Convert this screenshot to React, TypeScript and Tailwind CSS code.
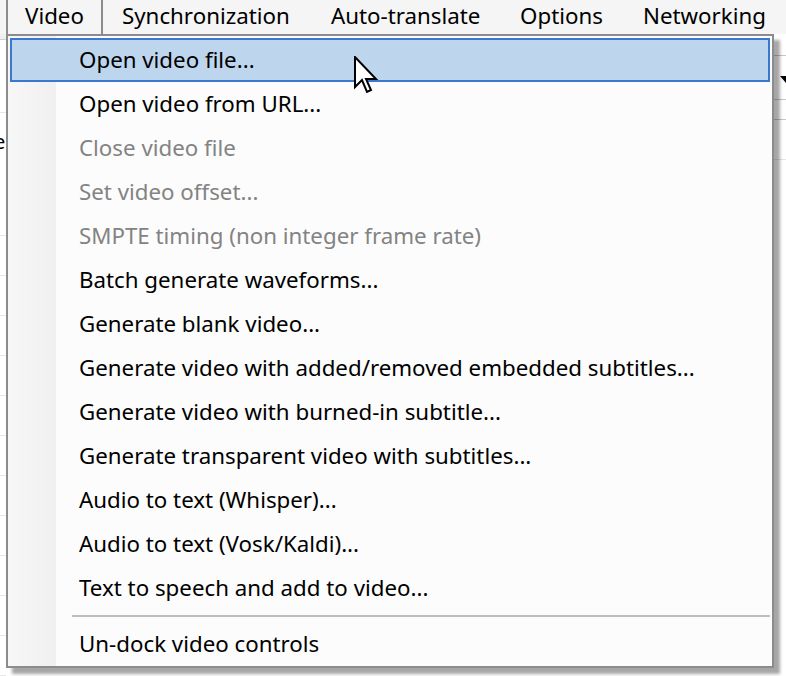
import React from "react"

const items = [
  {label: "Open video file...", active: true},
  {label: "Open video from URL..."},
  {label: "Close video file", disabled: true},
  {label: "Set video offset...", disabled: true},
  {label: "SMPTE timing (non integer frame rate)", disabled: true},
  {label: "Batch generate waveforms..."},
  {label: "Generate blank video..."},
  {label: "Generate video with added/removed embedded subtitles..."},
  {label: "Generate video with burned-in subtitle..."},
  {label: "Generate transparent video with subtitles..."},
  {label: "Audio to text (Whisper)..."},
  {label: "Audio to text (Vosk/Kaldi)..."},
  {label: "Text to speech and add to video..."},
]

const gridRows = [0, 1, 2, 3, 4, 5, 6, 7, 8, 9, 10, 11]

function Cursor() {
  return (
    <svg width="26" height="40" viewBox="0 0 13 20" className="absolute left-[354px] top-[56px]">
      <path
        d="M0.5 0.5 L0.5 15.5 L4 12 L6.5 18 L8.5 17 L6 11.5 L11 11.5 Z"
        fill="white"
        stroke="black"
        strokeWidth="1"
        strokeLinejoin="miter"
      />
    </svg>
  )
}

export default function App() {
  return (
    <div className="relative w-[786px] h-[676px] overflow-hidden bg-white font-['Noto_Sans',sans-serif] text-[22.3px] text-black">
      {/* menu bar */}
      <div className="flex h-[34px] bg-[#f5f5f5] items-center whitespace-nowrap">
        <div className="ml-[6px] h-[34px] w-[97px] border-x-2 border-[#8c8c8c] flex items-center justify-center pb-[2px]">
          Video
        </div>
        <div className="w-[209px] pl-[19px] pb-[2px] h-[34px] flex items-center">Synchronization</div>
        <div className="w-[189px] pl-[19px] pb-[2px] h-[34px] flex items-center">Auto-translate</div>
        <div className="w-[123px] pl-[19px] pb-[2px] h-[34px] flex items-center">Options</div>
        <div className="pl-[19px] pb-[2px] h-[34px] flex items-center">Networking</div>
      </div>

      {/* background content peeking out */}
      <div className="absolute left-0 top-[34px] w-[6px] h-[642px] flex flex-col">
        <div className="h-[6px] bg-[#f0f0f0] border-b border-[#d0d0d0]" />
        <div className="h-[80px] border-b border-[#e6e6e6]" />
        <div className="h-[91px] flex items-center text-[20px] leading-none -ml-[6px] overflow-hidden">
          <span className="-translate-y-[12px]">e</span>
        </div>
        {gridRows.map((r) => (
          <div key={r} className="h-[40px] shrink-0 border-b border-[#e6e6e6]" />
        ))}
      </div>
      <div className="absolute right-0 top-[40px] w-[12px] h-[636px] flex flex-col">
        <div className="h-[16px] border-b border-[#c8c8c8]" />
        <div className="h-[44px] border-b border-[#c8c8c8]" />
        <div className="h-[20px] border-b border-[#c8c8c8]" />
        <div className="h-[40px] border-b border-[#e6e6e6]" />
      </div>
      <div className="absolute right-0 top-[76px] w-0 h-0 border-l-[6px] border-r-[6px] border-t-[7px] border-l-transparent border-r-transparent border-t-black translate-x-[6px]" />

      {/* dropdown */}
      <div className="absolute left-[6px] top-[34px] w-[768px] h-[634px] border-2 border-[#8c8c8c] bg-[#fcfcfc] shadow-[6px_6px_3px_rgba(0,0,0,0.35)]">
        <div className="absolute left-0 top-0 bottom-0 w-[48px] bg-gradient-to-r from-[#f7f7f7] to-[#f0f0f0]" />
        <div className="relative flex flex-col pt-[2px] px-[2px] whitespace-nowrap">
          {items.map((it) => (
            <div
              key={it.label}
              className={
                it.active
                  ? "h-[44px] flex items-center pl-[67px] border-2 border-[#3a78d0] bg-[#bdd6ee]"
                  : "h-[44px] flex items-center pl-[69px]"
              }
            >
              <span className={it.disabled ? "text-[#838383]" : ""}>{it.label}</span>
            </div>
          ))}
          <div className="h-[12px] flex items-center pl-[62px]">
            <div className="h-[2px] w-full bg-[#bdbdbd]" />
          </div>
          <div className="h-[44px] flex items-center pl-[69px]">Un-dock video controls</div>
        </div>
      </div>

      <Cursor />
    </div>
  )
}
